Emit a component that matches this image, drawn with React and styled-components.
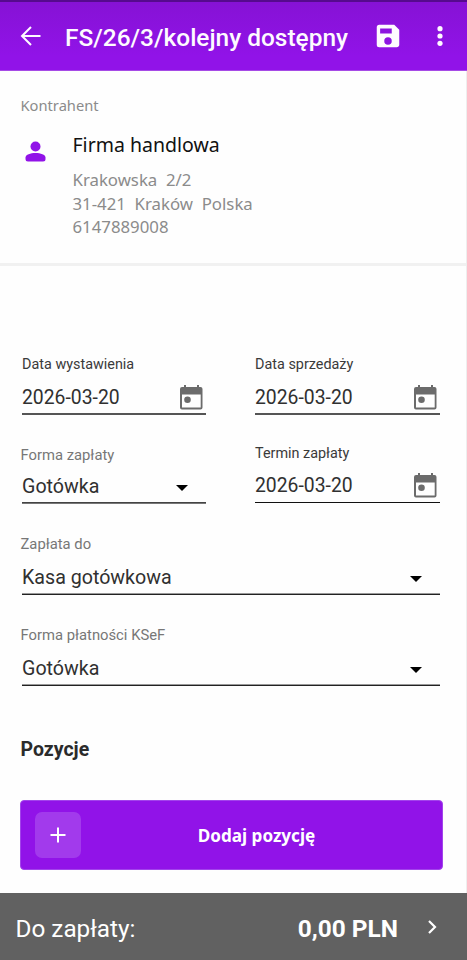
import React from "react";
import styled, { createGlobalStyle } from "styled-components";

const GlobalStyle = createGlobalStyle`
  * { box-sizing: border-box; }
  body { margin: 0; background: #fefefe; font-family: Roboto, "Liberation Sans", sans-serif; }
`;

const Screen = styled.div`
  width: 467px;
  height: 960px;
  display: flex;
  flex-direction: column;
  overflow: hidden;
`;

const AppBar = styled.header`
  height: 71px;
  flex: none;
  display: flex;
  align-items: center;
  padding: 0 15px 0 17px;
  color: #fefaff;
  border-top: 2px solid #560a8e;
  border-bottom: 1px solid #a64be6;
  background: linear-gradient(#8612d5, #9113e8 80%);
`;

const Title = styled.h1`
  flex: 1;
  margin: 0 0 0 20px;
  padding-top: 3px;
  font-size: 24.45px;
  line-height: 34px;
  font-weight: 500;
  white-space: nowrap;
`;

const Icon = styled.svg`
  display: block;
  flex: none;
  fill: currentColor;
  width: ${(p) => p.$size}px;
  height: ${(p) => p.$size}px;
  margin: ${(p) => p.$margin || 0};
`;

const Content = styled.main`
  flex: 1;
  display: flex;
  flex-direction: column;
  border-right: 1px solid #eeeeee;
`;

const Contractor = styled.section`
  height: 195px;
  border-bottom: 3px solid #f1f1f1;
  padding: 23px 21px 0 20.5px;
  font-family: "Noto Sans", sans-serif;
  color: #8b8b8b;
`;

const SectionLabel = styled.div`
  font-size: 14.7px;
  line-height: 22px;
`;

const ContractorRow = styled.div`
  display: flex;
  margin-top: 17px;
`;

const PersonSlot = styled.div`
  width: 52px;
  padding-top: 4px;
  color: #9113e8;
`;

const CompanyName = styled.div`
  color: #111;
  font-size: 19.5px;
  line-height: 24px;
  margin-bottom: 11px;
`;

const AddressLine = styled.div`
  font-size: 16.8px;
  line-height: 23.5px;
  white-space: pre;
`;

const Form = styled.section`
  display: grid;
  grid-template-columns: 185px 186px;
  column-gap: 48px;
  padding: 88px 0 0 21px;
  grid-template-rows: 88px 92px 91px 113px;
`;

const Field = styled.div`
  display: flex;
  flex-direction: column;
  grid-column: ${(p) => (p.$wide ? "1 / -1" : "auto")};
  padding-top: ${(p) => p.$top}px;
  height: ${(p) => 61 + (p.$extra || 0)}px;
`;

const FieldLabel = styled.div`
  font-size: ${(p) => (p.$muted ? 14.8 : 14.4)}px;
  line-height: 20px;
  margin-left: ${(p) => (p.$muted ? -0.5 : 1)}px;
  color: ${(p) => (p.$muted ? "#777" : "#3a3a3a")};
`;

const Control = styled.div`
  flex: 1;
  display: flex;
  align-items: center;
  justify-content: space-between;
  margin-left: 1px;
  padding: ${(p) => p.$offset}px ${(p) => p.$right}px 0 0;
  color: #303030;
  border-bottom: 1px solid ${(p) => p.$line};
  box-shadow: inset 0 -1px ${(p) => p.$edge};
`;

const Value = styled.span`
  font-size: ${(p) => (p.$date ? 19.35 : 19.65)}px;
  line-height: 24px;
  padding-top: ${(p) => (p.$date ? 2 : 0)}px;
  padding-bottom: ${(p) => (p.$date ? 0 : 2)}px;
`;

const Heading = styled.h2`
  margin: 0 0 0 20.5px;
  font-size: 19.5px;
  line-height: 24px;
  font-weight: 700;
  color: #2b2b2b;
`;

const AddButton = styled.button`
  display: flex;
  align-items: center;
  width: 423px;
  height: 70px;
  margin: 38px 0 0 20px;
  padding: 0 15px;
  border: 1px solid #a244eb;
  border-radius: 4px;
  background: #9113e8;
  color: #fff;
  font: 700 17.1px "Noto Sans", sans-serif;
`;

const PlusTile = styled.span`
  display: flex;
  align-items: center;
  justify-content: center;
  width: 46px;
  height: 46px;
  margin-left: -1px;
  border-radius: 7px;
  background: #a23aec;
`;

const AddLabel = styled.span`
  flex: 1;
  text-align: center;
  padding-left: 7px;
  padding-right: 2px;
`;

const Total = styled.footer`
  height: 67px;
  flex: none;
  display: flex;
  align-items: center;
  padding: 5px 23px 0 15.5px;
  background: #616161;
  color: #fff;
  font-size: 24.3px;
  line-height: 32px;
`;

const Amount = styled.strong`
  margin-left: auto;
  font-size: 24.4px;
  font-weight: 700;
`;

const CalendarIcon = () => (
  <Icon $size={25} viewBox="0 0 25 25" color="#6b6b6b">
    <path
      fillRule="evenodd"
      d="M5 0h2v2h11V0h2v2h1.500a2 2 0 0 1 2 2v18.500a2 2 0 0 1-2 2h-18.500a2 2 0 0 1-2-2V4a2 2 0 0 1 2-2H5zM3 9.500v13h18.700v-13z"
    />
    <circle cx="8.500" cy="14.800" r="3.300" />
  </Icon>
);

const Caret = () => (
  <Icon $size={12} viewBox="0 0 12 12">
    <path d="M0 3h12L6 9z" fill="#000" />
  </Icon>
);

const DateField = ({ label, line, edge, top = 1 }) => (
  <Field $top={top}>
    <FieldLabel>{label}</FieldLabel>
    <Control $offset={top === 1 ? 5 : 4} $right={2} $line={line} $edge={edge}>
      <Value $date>2026-03-20</Value>
      <CalendarIcon />
    </Control>
  </Field>
);

const SelectField = ({ label, value, wide, top = 0, extra, offset = 9, line = "#222", edge = "#999" }) => (
  <Field $wide={wide} $top={top} $extra={extra}>
    <FieldLabel $muted>{label}</FieldLabel>
    <Control $offset={offset} $right={18} $line={line} $edge={edge}>
      <Value>{value}</Value>
      <Caret />
    </Control>
  </Field>
);

export default function App() {
  return (
    <Screen>
      <GlobalStyle />
      <AppBar>
        <Icon $size={28} viewBox="0 0 28 28">
          <path d="M4.500 14h19M14 5L5 14l9 9" fill="none" stroke="currentColor" strokeWidth="2" />
        </Icon>
        <Title>FS/26/3/kolejny dostępny</Title>
        <Icon $size={30} viewBox="0 0 24 24" $margin="0 25px 0 0">
          <path d="M17 3H5a2 2 0 0 0-2 2v14a2 2 0 0 0 2 2h14c1.100 0 2-.9 2-2V7l-4-4zm-5 16a3 3 0 1 1 0-6 3 3 0 0 1 0 6zm3-9H5.700V6H15v4z" />
        </Icon>
        <Icon $size={24} viewBox="0 0 24 24">
          <circle cx="12" cy="4.700" r="2.600" />
          <circle cx="12" cy="12" r="2.600" />
          <circle cx="12" cy="19.300" r="2.600" />
        </Icon>
      </AppBar>
      <Content>
        <Contractor>
          <SectionLabel>Kontrahent</SectionLabel>
          <ContractorRow>
            <PersonSlot>
              <Icon $size={28} viewBox="0 0 28 28">
                <circle cx="14.500" cy="9.500" r="5" />
                <path d="M4.500 22v-1.500C4.500 17.500 9.500 16 14.500 16s10 1.500 10 4.500V22a2.500 2.500 0 0 1-2.500 2.500h-15A2.500 2.500 0 0 1 4.500 22z" />
              </Icon>
            </PersonSlot>
            <div>
              <CompanyName>Firma handlowa</CompanyName>
              <AddressLine>{"Krakowska  2/2"}</AddressLine>
              <AddressLine>{"31-421  Kraków  Polska"}</AddressLine>
              <AddressLine>6147889008</AddressLine>
            </div>
          </ContractorRow>
        </Contractor>
        <Form>
          <DateField label="Data wystawienia" line="#555" edge="#555" />
          <DateField label="Data sprzedaży" line="#555" edge="#555" />
          <SelectField label="Forma zapłaty" value="Gotówka" top={3} extra={1} offset={7} line="#777" edge="#444" />
          <DateField label="Termin zapłaty" top={2} line="#111" edge="transparent" />
          <SelectField wide label="Zapłata do" value="Kasa gotówkowa" />
          <SelectField wide label="Forma płatności KSeF" value="Gotówka" />
        </Form>
        <Heading>Pozycje</Heading>
        <AddButton type="button">
          <PlusTile>
            <Icon $size={16} viewBox="0 0 16 16">
              <path d="M7 0.500h2V7h6.500v2H9v6.500H7V9H0.500V7H7z" />
            </Icon>
          </PlusTile>
          <AddLabel>Dodaj pozycję</AddLabel>
        </AddButton>
      </Content>
      <Total>
        <span>Do zapłaty:</span>
        <Amount>0,00 PLN</Amount>
        <Icon $size={24} viewBox="0 0 24 24" $margin="0 0 4px 22px">
          <path d="M9 6l6 6-6 6" fill="none" stroke="currentColor" strokeWidth="2.200" />
        </Icon>
      </Total>
    </Screen>
  );
}
